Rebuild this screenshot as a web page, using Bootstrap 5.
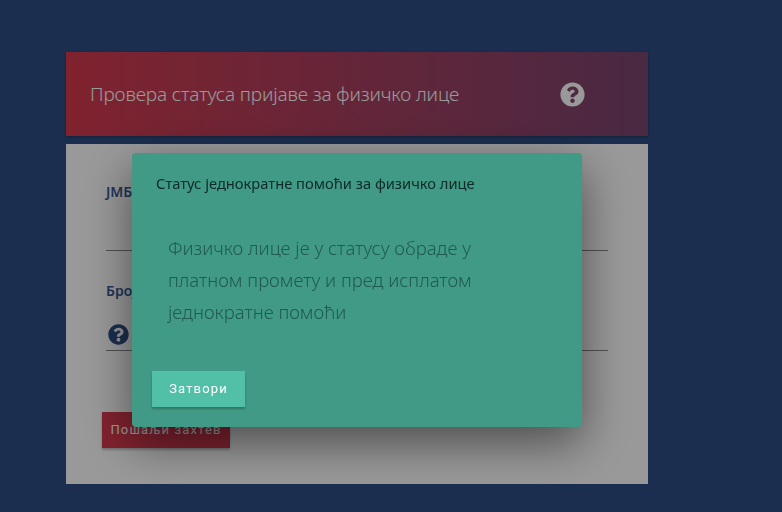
<!DOCTYPE html>
<html lang="sr">
<head>
<meta charset="utf-8">
<title>Провера статуса</title>
<link href="https://cdn.jsdelivr.net/npm/bootstrap@5.3.0/dist/css/bootstrap.min.css" rel="stylesheet">
<style>
html,body{height:512px;overflow:hidden}
body{background:#2d4e85;font-family:"Noto Sans","Open Sans",sans-serif;padding:52px 0 0 66px}
.shell{width:582px}
.hero{height:84px;background:linear-gradient(90deg,#d53a4e,#7a4570);padding:0 63px 0 24px;margin-bottom:8px;box-shadow:0 1px 3px rgba(0,0,0,.3)}
.hero-title{font-size:19px;font-weight:300;letter-spacing:-.12px;color:#fff;margin:0}
.hero-help{width:25px;height:25px;display:block;fill:#fff}
.form-panel{background:#fff;height:340px;padding:38px 40px 0 40px}
.lbl{font-size:14px;font-weight:600;color:#375a96;margin:0;line-height:20px}
.rule{border-bottom:1px solid #888;height:1px}
.first-rule{margin-top:48px}
.second-label{margin-top:30px}
.sub-help{width:21px;height:21px;display:block;margin:23px 0 0 2px;fill:#2d4e85}
.second-rule{margin-top:5px}
.send-btn{background:#d63a4f;color:#fff;font-family:Roboto,sans-serif;font-size:13px;letter-spacing:1.15px;border-radius:0;border:0;width:128px;height:36px;padding:0;margin:61px 0 0 -4px;box-shadow:0 2px 2px rgba(0,0,0,.25)}
.dim{position:fixed;inset:0;background:#000;opacity:.4;z-index:1040}
.dialog-box{position:fixed;left:132px;top:153px;width:450px;height:274px;background:#419a85;border:0;border-radius:4px;box-shadow:0 16px 48px rgba(0,0,0,.5);z-index:1050}
.dialog-head{padding:20px 24px 0;height:66px}
.dialog-title{font-size:14.7px;font-weight:400;color:#0d2a26;margin:0;line-height:20px}
.dialog-text{font-size:18.5px;font-weight:300;line-height:32px;color:#205b50;padding:13px 90px 0 36px;margin:0;height:152px}
.dialog-foot{padding:0 20px}
.close-btn{background:#52c0a6;color:#fff;font-family:Roboto,sans-serif;font-size:13px;letter-spacing:1.15px;border:0;border-radius:0;width:93px;height:36px;padding:0;box-shadow:0 2px 2px rgba(0,0,0,.25)}
</style>
</head>
<body>
<div class="shell">
  <div class="hero d-flex align-items-center justify-content-between">
    <h1 class="hero-title">Провера статуса пријаве за физичко лице</h1>
    <svg class="hero-help" viewBox="0 0 512 512"><path d="M504 256c0 136.997-111.043 248-248 248S8 392.997 8 256C8 119.083 119.043 8 256 8s248 111.083 248 248zM262.655 90c-54.497 0-89.255 22.957-116.549 63.758-3.536 5.286-2.353 12.415 2.715 16.258l34.699 26.31c5.205 3.947 12.621 3.008 16.665-2.122 17.864-22.658 30.113-35.797 57.303-35.797 20.429 0 45.698 13.148 45.698 32.958 0 14.976-12.363 22.667-32.534 33.976C247.128 238.528 216 254.941 216 296v4c0 6.627 5.373 12 12 12h56c6.627 0 12-5.373 12-12v-1.333c0-28.462 83.186-29.647 83.186-106.667 0-58.002-60.165-102-116.531-102zM256 338c-25.365 0-46 20.635-46 46 0 25.364 20.635 46 46 46s46-20.636 46-46c0-25.365-20.635-46-46-46z"/></svg>
  </div>
  <div class="form-panel">
    <p class="lbl">JMБГ</p>
    <div class="rule first-rule"></div>
    <p class="lbl second-label">Број</p>
    <svg class="sub-help" viewBox="0 0 512 512"><path d="M504 256c0 136.997-111.043 248-248 248S8 392.997 8 256C8 119.083 119.043 8 256 8s248 111.083 248 248zM262.655 90c-54.497 0-89.255 22.957-116.549 63.758-3.536 5.286-2.353 12.415 2.715 16.258l34.699 26.31c5.205 3.947 12.621 3.008 16.665-2.122 17.864-22.658 30.113-35.797 57.303-35.797 20.429 0 45.698 13.148 45.698 32.958 0 14.976-12.363 22.667-32.534 33.976C247.128 238.528 216 254.941 216 296v4c0 6.627 5.373 12 12 12h56c6.627 0 12-5.373 12-12v-1.333c0-28.462 83.186-29.647 83.186-106.667 0-58.002-60.165-102-116.531-102zM256 338c-25.365 0-46 20.635-46 46 0 25.364 20.635 46 46 46s46-20.636 46-46c0-25.365-20.635-46-46-46z"/></svg>
    <div class="rule second-rule"></div>
    <button class="btn send-btn" type="button">Пошаљи захтев</button>
  </div>
</div>
<div class="dim"></div>
<div class="dialog-box">
  <div class="dialog-head"><h5 class="dialog-title">Статус једнократне помоћи за физичко лице</h5></div>
  <p class="dialog-text">Физичко лице је у статусу обраде у платном промету и пред исплатом једнократне помоћи</p>
  <div class="dialog-foot"><button class="btn close-btn" type="button">Затвори</button></div>
</div>
<script src="https://cdn.jsdelivr.net/npm/bootstrap@5.3.0/dist/js/bootstrap.bundle.min.js"></script>
</body>
</html>
